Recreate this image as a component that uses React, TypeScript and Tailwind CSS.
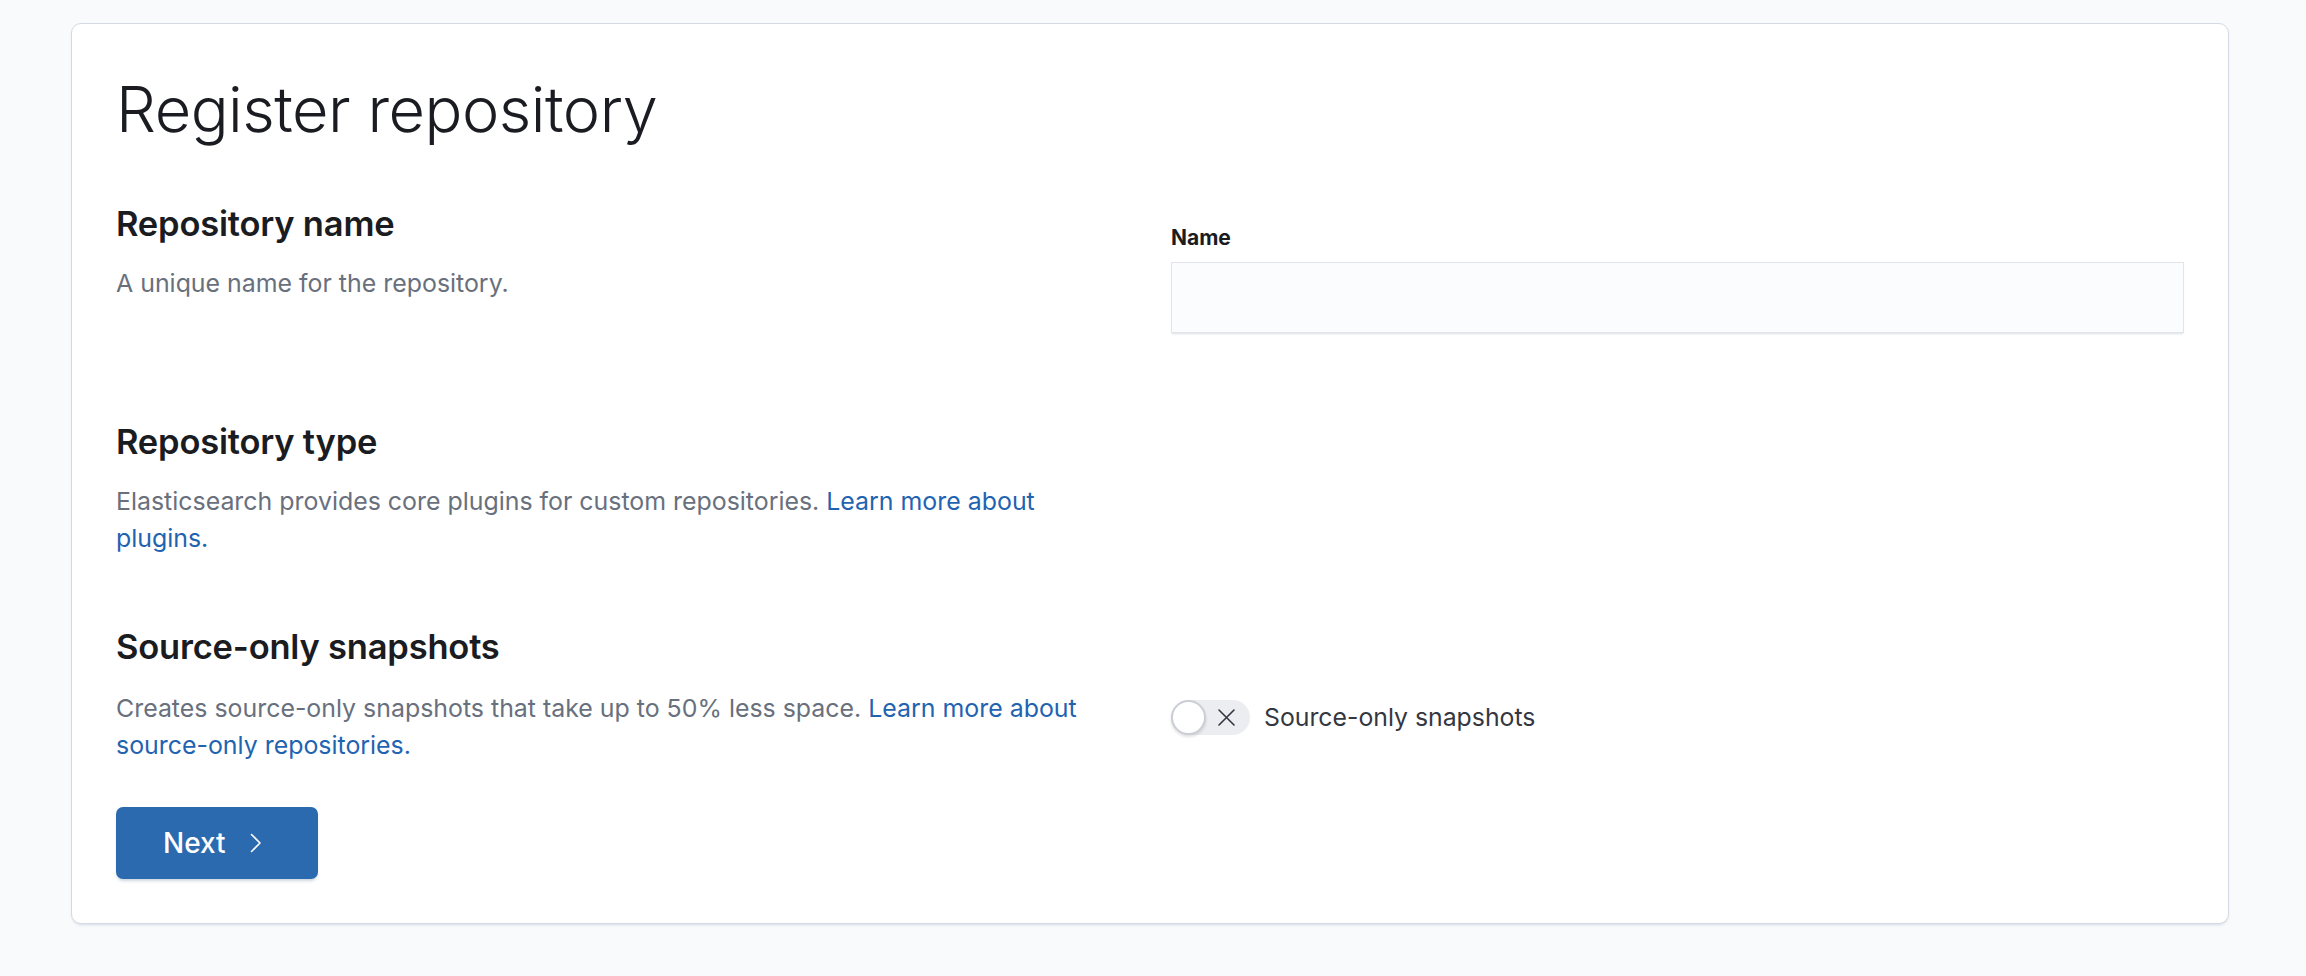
import React from 'react';

const font = { fontFamily: 'Inter, "Noto Sans", sans-serif' };

const SectionTitle: React.FC<{ children: React.ReactNode }> = ({ children }) => (
  <h3 className="text-[34.5px] leading-[42px] font-semibold text-[#1a1c21] tracking-[-0.2px]">{children}</h3>
);

const Description: React.FC<{ children: React.ReactNode; className?: string }> = ({ children, className = '' }) => (
  <p className={`text-[24.9px] leading-[37px] text-[#69707d] ${className}`}>{children}</p>
);

const Link: React.FC<{ children: React.ReactNode }> = ({ children }) => (
  <a href="#" className="text-[#1f63b1]">
    {children}
  </a>
);

const Switch: React.FC = () => (
  <div className="flex items-center">
    <button
      type="button"
      role="switch"
      aria-checked="false"
      className="flex items-center w-[79px] h-[35px] rounded-full bg-[#ebedf1]"
    >
      <span className="w-[35px] h-[35px] rounded-full bg-white border-2 border-[#cbced4] shadow-[0_2px_3px_rgba(0,0,0,0.12)]" />
      <svg className="ml-[12px]" width="17" height="17" viewBox="0 0 17 17" fill="none">
        <path d="M1 1 L16 16 M16 1 L1 16" stroke="#343741" strokeWidth="1.6" strokeLinecap="round" />
      </svg>
    </button>
    <span className="ml-[14px] text-[24.8px] leading-[35px] text-[#343741]">Source-only snapshots</span>
  </div>
);

export default function App() {
  return (
    <div className="min-h-[976px] bg-[#f9fafc] pt-[23px] pb-[52px]" style={font}>
      <div className="ml-[71px] mr-[77px] bg-white border border-[#d3dae6] rounded-[10px] px-[44px] pt-[47px] pb-[44px] shadow-[0_2px_3px_-1px_rgba(152,162,179,0.35)]">
        <h1 className="text-[63px] leading-[76px] font-light text-[#1a1c21] tracking-[-0.5px]">Register repository</h1>

        {/* Repository name */}
        <div className="grid grid-cols-2 gap-x-[42px] mt-[56px]">
          <div>
            <SectionTitle>Repository name</SectionTitle>
            <Description className="mt-[20px]">A unique name for the repository.</Description>
          </div>
          <div className="pt-[20px]">
            <label className="block text-[21px] leading-[30px] font-bold text-[#1a1c21]">Name</label>
            <input
              type="text"
              className="mt-[9px] block w-full h-[71px] bg-[#fbfcfd] border border-[#e1e4e8] shadow-[0_2px_2px_-1px_rgba(152,162,179,0.35)] outline-none"
            />
          </div>
        </div>

        {/* Repository type */}
        <div className="grid grid-cols-2 gap-x-[42px] mt-[88px]">
          <div>
            <SectionTitle>Repository type</SectionTitle>
            <Description className="mt-[20px]">
              Elasticsearch provides core plugins for custom repositories. <Link>Learn more about</Link>
              <br />
              <Link>plugins.</Link>
            </Description>
          </div>
          <div />
        </div>

        {/* Source-only snapshots */}
        <div className="grid grid-cols-2 gap-x-[42px] mt-[69px]">
          <div>
            <SectionTitle>Source-only snapshots</SectionTitle>
            <Description className="mt-[22px]">
              Creates source-only snapshots that take up to 50% less space. <Link>Learn more about</Link>
              <br />
              <Link>source-only repositories.</Link>
            </Description>
          </div>
          <div className="pt-[74px]">
            <Switch />
          </div>
        </div>

        <button
          type="button"
          className="mt-[43px] flex items-center gap-[24px] w-[202px] h-[72px] pl-[47px] rounded-[7px] bg-[#2c6aaf] text-white text-[28px] font-medium shadow-[0_3px_3px_-1px_rgba(54,97,126,0.25)]"
        >
          <span>Next</span>
          <svg width="12" height="20" viewBox="0 0 12 20" fill="none">
            <path d="M1.5 1.5 L10 10 L1.5 18.5" stroke="white" strokeWidth="1.6" strokeLinecap="round" strokeLinejoin="round" />
          </svg>
        </button>
      </div>
    </div>
  );
}
